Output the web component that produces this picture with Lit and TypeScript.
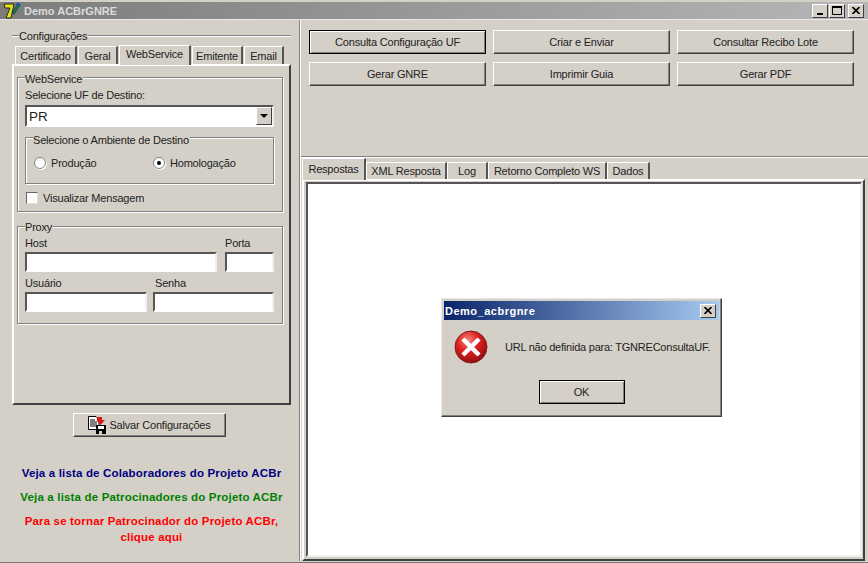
import { LitElement, html, css, svg } from "lit";
import { customElement } from "lit/decorators.js";

const leftTabs = [
  { t: "Certificado", w: 62 },
  { t: "Geral", w: 40 },
  { t: "WebService", w: 72, on: true },
  { t: "Emitente", w: 51 },
  { t: "Email", w: 40 },
];
const rightTabs = [
  { t: "Respostas", w: 64, on: true },
  { t: "XML Resposta", w: 81 },
  { t: "Log", w: 41 },
  { t: "Retorno Completo WS", w: 119 },
  { t: "Dados", w: 43 },
];
const actions = ["Consulta Configuração UF", "Criar e Enviar", "Consultar Recibo Lote", "Gerar GNRE", "Imprimir Guia", "Gerar PDF"];

@customElement("app-root")
export class AppRoot extends LitElement {
  static styles = css`
    :host { display: block; width: 868px; height: 563px; overflow: hidden; }
    * { box-sizing: border-box; }
    .win {
      position: relative; width: 868px; height: 563px; background: #d4d0c8;
      font: 11px "Liberation Sans", Arial, sans-serif; letter-spacing: -0.2px; color: #222;
      display: flex; flex-direction: column; border-bottom: 1px solid #777; padding-bottom: 1px;
    }
    .titlebar {
      flex: 0 0 18px; margin-top: 2px; padding: 0 4px 0 3px;
      background: linear-gradient(90deg, #7c7c7c, #b6b6b6); display: flex; align-items: center;
      border-bottom: 1px solid #e8e8e8;
    }
    .titlebar .name { margin-left: 3px; font: bold 11px "Liberation Sans", sans-serif; color: #dcdcdc; letter-spacing: 0; }
    .ctrls { margin-left: auto; display: flex; }
    .ctrl {
      width: 16px; height: 14px; background: #d4d0c8; margin-left: 1px;
      border: 1px solid; border-color: #fff #404040 #404040 #fff; display: flex; align-items: center; justify-content: center;
    }
    .ctrl.close { margin-left: 3px; }
    .body { flex: 1; display: flex; min-height: 0; }
    .left { flex: 0 0 299px; padding: 15px 0 0 12px; display: flex; flex-direction: column; }
    .split { flex: 0 0 2px; background: #d4d0c8; border-left: 1px solid #808080; border-right: 1px solid #fff; }
    .right { flex: 1; display: flex; flex-direction: column; min-width: 0; }

    .config { width: 279px; height: 370px; display: flex; flex-direction: column; border-top: 1px solid #808080; box-shadow: inset 0 1px 0 #fff; }
    .legend { background: #d4d0c8; width: fit-content; padding: 0 1px 0 0; line-height: 13px; height: 13px; }
    .config > .legend { margin: -6px 0 0 7px; }
    .strip { display: flex; align-items: flex-end; height: 21px; padding-left: 3px; gap: 1px; flex: none; position: relative; z-index: 1; }
    .tab {
      height: 18px; display: flex; align-items: center; justify-content: center; background: #d4d0c8;
      border-top: 1px solid #fff; border-left: 1px solid #fff; border-right: 2px solid #555; flex: none; padding-top: 1px; white-space: nowrap;
    }
    .tab.on { height: 20px; margin-bottom: -1px; padding-top: 0; padding-bottom: 3px; }
    .page {
      flex: 1; border: 2px solid; border-color: #fff #404040 #404040 #fff; padding: 11px 6px 0 3px; min-height: 0;
    }
    .group { border: 1px solid #808080; box-shadow: 1px 1px 0 #fff, inset 1px 1px 0 #fff; padding: 0 6px 0 7px; }
    .group > .legend { margin: -5px 0 0 0; }
    .ws { height: 135px; }
    .lbl { line-height: 13px; height: 13px; display: block; white-space: nowrap; }
    .ws .lbl.first { margin-top: 3px; }
    .combo {
      margin-top: 3px; height: 22px; width: 249px; background: #fff; display: flex; align-items: center; justify-content: space-between;
      border: 2px solid; border-color: #555 #eee #fff #555; padding-left: 2px; font-size: 13.5px; letter-spacing: 0;
    }
    .drop { width: 16px; height: 18px; background: #d4d0c8; border: 1px solid; border-color: #fff #404040 #404040 #fff; display: flex; align-items: center; justify-content: center; }
    .tri { width: 0; height: 0; border: 4px solid transparent; border-top-color: #000; border-bottom: 0; }
    .amb { width: 249px; height: 47px; margin-top: 10px; padding: 0 0 0 7px; }
    .amb > .legend { margin-top: -4px; }
    .radios { display: flex; margin-top: 10px; padding-left: 1px; }
    .radio { display: flex; align-items: center; gap: 5px; width: 119px; }
    .dot {
      width: 12px; height: 12px; border-radius: 50%; background: #fff; border: 1px solid #808080; box-shadow: 1px 1px 0 #fff;
      display: flex; align-items: center; justify-content: center; flex: none;
    }
    .dot i { width: 4px; height: 4px; border-radius: 50%; background: #000; display: block; }
    .check { display: flex; align-items: center; gap: 5px; margin-top: 8px; margin-left: 1px; }
    .box { width: 12px; height: 12px; background: #fff; border: 1px solid #666; border-right-color: #ddd; border-bottom-color: #ddd; flex: none; }
    .proxy { height: 98px; margin-top: 14px; }
    .proxy > .legend { margin-top: -6px; }
    .grid2 { display: grid; column-gap: 8px; }
    .g1 { grid-template-columns: 192px 49px; margin-top: 3px; }
    .g2 { grid-template-columns: 122px 121px; column-gap: 6px; margin-top: 2px; }
    .field { display: flex; flex-direction: column; gap: 2px; }
    .g1 .field { height: 38px; }
    .lbl.indent { padding-left: 2px; }
    .input { height: 20px; background: #fff; border: 2px solid; border-color: #555 #eee #fff #555; }

    .save-wrap { display: flex; justify-content: center; padding: 8px 4px 0 0; width: 279px; }
    .btn {
      background: #d4d0c8; border: 1px solid; border-color: #fff #404040 #404040 #fff;
      box-shadow: inset -1px -1px 0 #808080; display: flex; align-items: center; justify-content: center; white-space: nowrap; color: #222;
    }
    .save { width: 153px; height: 24px; gap: 3px; }
    .links { margin-top: 28px; width: 279px; font: bold 11.5px "Liberation Sans", sans-serif; letter-spacing: 0.17px; text-align: center; line-height: 16px; display: flex; flex-direction: column; }
    .links div { white-space: nowrap; overflow: hidden; }
    .l1 { color: #000080; height: 24px; }
    .l2 { color: #008000; height: 24px; }
    .l3 { color: #ff0000; }

    .tools { flex: 0 0 137px; padding: 10px 13px 0 8px; display: grid; grid-template-columns: repeat(3, 177px); grid-auto-rows: 24px; column-gap: 7px; row-gap: 8px; align-content: start; border-bottom: 1px solid #808080; }
    .tools .btn.def { border: 1px solid #000; box-shadow: inset 1px 1px 0 #fff, inset -1px -1px 0 #808080; }
    .rtabs { flex: 1; display: flex; flex-direction: column; min-height: 0; box-shadow: inset 0 1px 0 #fff; }
    .rstrip { display: flex; align-items: flex-end; height: 22px; padding-left: 1px; flex: none; position: relative; z-index: 1; }
    .rstrip .tab { height: 17px; padding-top: 0; }
    .rstrip .tab.on { height: 22px; padding-bottom: 2px; }
    .rpage { flex: 1; margin: 0 3px 0 1px; border: 2px solid; border-color: #fff #404040 #404040 #fff; padding: 1px 1px 2px 2px; display: flex; min-height: 0; }
    .memo { flex: 1; background: #fff; border: 2px solid; border-color: #555 #eee #eee #555; }

    .dialog {
      position: absolute; left: 441px; top: 298px; width: 281px; height: 119px; background: #d4d0c8; padding: 2px;
      border: 1px solid; border-color: #e8e8e8 #404040 #404040 #e8e8e8; box-shadow: inset -1px -1px 0 #808080; display: flex; flex-direction: column;
    }
    .dtitle {
      height: 19px; background: linear-gradient(90deg, #0a246a, #a6caf0); color: #fff; display: flex; align-items: center; justify-content: space-between;
      padding: 0 3px 0 1px; font: bold 11px "Liberation Sans", sans-serif; letter-spacing: 0.5px; flex: none;
    }
    .dtitle .ctrl { margin: 0; height: 14px; width: 16px; }
    .dmain { display: flex; align-items: center; padding: 0 0 0 10px; gap: 17px; height: 54px; flex: none; }
    .dmain span { white-space: nowrap; letter-spacing: -0.23px; }
    .dfoot { display: flex; justify-content: center; margin-top: 6px; }
    .ok { width: 86px; height: 24px; border: 1px solid #000; box-shadow: inset 1px 1px 0 #fff, inset -1px -1px 0 #808080; }
    svg { display: block; flex: none; }
  `;

  private xIcon(s = 8) {
    return html`<svg width=${s} height=${s - 1} viewBox="0 0 8 7"><path d="M0.5 0 L7.5 7 M7.5 0 L0.5 7" stroke="#000" stroke-width="1.6"/></svg>`;
  }

  private tabs(list: { t: string; w: number; on?: boolean }[]) {
    return list.map((x) => html`<div class="tab ${x.on ? "on" : ""}" style="width:${x.w}px">${x.t}</div>`);
  }

  private appIcon() {
    return html`<svg width="18" height="17" viewBox="0 0 18 17">
      <path d="M1 2 H11 L8 16 H3 L7 6 H2 Z" fill="#e8e020" stroke="#2a2a10" stroke-width="1"/>
      <path d="M9 11 L15 2 L17 3 L11 12 Z" fill="#1a8a4a" stroke="#0a2a50" stroke-width="0.8"/>
      <path d="M13 3 L16 1" stroke="#2050c0" stroke-width="2"/>
    </svg>`;
  }

  private saveIcon() {
    return html`<svg width="18" height="18" viewBox="0 0 18 18">
      <path d="M.5 .5 H8 L11 3.5 V13.5 H.5 Z" fill="#fff" stroke="#000"/>
      <path d="M2 4 H7 M2 6 H9 M2 8 H9 M2 10 H8" stroke="#000"/>
      <path d="M9 1 L14 1 L14 4 L17 4 L12.5 9 L9 5 Z" fill="#d81818"/>
      <rect x="8" y="9" width="10" height="9" fill="#000"/>
      <rect x="10" y="10" width="6" height="3" fill="#fff"/>
      <rect x="11" y="15" width="3" height="3" fill="#d4d0c8"/>
    </svg>`;
  }

  private errIcon() {
    return html`<svg width="34" height="34" viewBox="0 0 34 34">
      <defs><radialGradient id="e" cx="40%" cy="30%" r="75%"><stop offset="0" stop-color="#f58a80"/><stop offset=".45" stop-color="#e02020"/><stop offset="1" stop-color="#8c0c0c"/></radialGradient></defs>
      <circle cx="17" cy="17" r="16" fill="url(#e)" stroke="#7a2020"/>
      ${svg`<path d="M10.5 10.5 L23.5 23.5 M23.5 10.5 L10.5 23.5" stroke="#fff" stroke-width="4.4" stroke-linecap="square"/>`}
    </svg>`;
  }

  render() {
    return html`<div class="win">
      <div class="titlebar">
        ${this.appIcon()}
        <div class="name">Demo ACBrGNRE</div>
        <div class="ctrls">
          <div class="ctrl"><svg width="8" height="8" viewBox="0 0 8 8"><path d="M1 7 H7" stroke="#000" stroke-width="2"/></svg></div>
          <div class="ctrl"><svg width="10" height="9" viewBox="0 0 10 9"><path d="M.5 1 H9.5 V8.5 H.5 Z" fill="none" stroke="#000"/><path d="M0 1 H10" stroke="#000" stroke-width="2"/></svg></div>
          <div class="ctrl close">${this.xIcon()}</div>
        </div>
      </div>
      <div class="body">
        <div class="left">
          <div class="config">
            <div class="legend">Configurações</div>
            <div class="strip">${this.tabs(leftTabs)}</div>
            <div class="page">
              <div class="group ws">
                <div class="legend">WebService</div>
                <span class="lbl first">Selecione UF de Destino:</span>
                <div class="combo">PR<div class="drop"><div class="tri"></div></div></div>
                <div class="group amb">
                  <div class="legend">Selecione o Ambiente de Destino</div>
                  <div class="radios">
                    <div class="radio"><div class="dot"></div>Produção</div>
                    <div class="radio"><div class="dot"><i></i></div>Homologação</div>
                  </div>
                </div>
                <div class="check"><div class="box"></div>Visualizar Mensagem</div>
              </div>
              <div class="group proxy">
                <div class="legend">Proxy</div>
                <div class="grid2 g1">
                  <div class="field"><span class="lbl">Host</span><div class="input"></div></div>
                  <div class="field"><span class="lbl">Porta</span><div class="input"></div></div>
                </div>
                <div class="grid2 g2">
                  <div class="field"><span class="lbl">Usuário</span><div class="input"></div></div>
                  <div class="field"><span class="lbl indent">Senha</span><div class="input"></div></div>
                </div>
              </div>
            </div>
          </div>
          <div class="save-wrap"><div class="btn save">${this.saveIcon()}Salvar Configurações</div></div>
          <div class="links">
            <div class="l1">Veja a lista de Colaboradores do Projeto ACBr</div>
            <div class="l2">Veja a lista de Patrocinadores do Projeto ACBr</div>
            <div class="l3">Para se tornar Patrocinador do Projeto ACBr,<br />clique aqui</div>
          </div>
        </div>
        <div class="split"></div>
        <div class="right">
          <div class="tools">
            ${actions.map((a, i) => html`<div class="btn ${i === 0 ? "def" : ""}">${a}</div>`)}
          </div>
          <div class="rtabs">
            <div class="rstrip">${this.tabs(rightTabs)}</div>
            <div class="rpage"><div class="memo"></div></div>
          </div>
        </div>
      </div>
      <div class="dialog">
        <div class="dtitle">Demo_acbrgnre<div class="ctrl">${this.xIcon()}</div></div>
        <div class="dmain">${this.errIcon()}<span>URL não definida para: TGNREConsultaUF.</span></div>
        <div class="dfoot"><div class="btn ok">OK</div></div>
      </div>
    </div>`;
  }
}
